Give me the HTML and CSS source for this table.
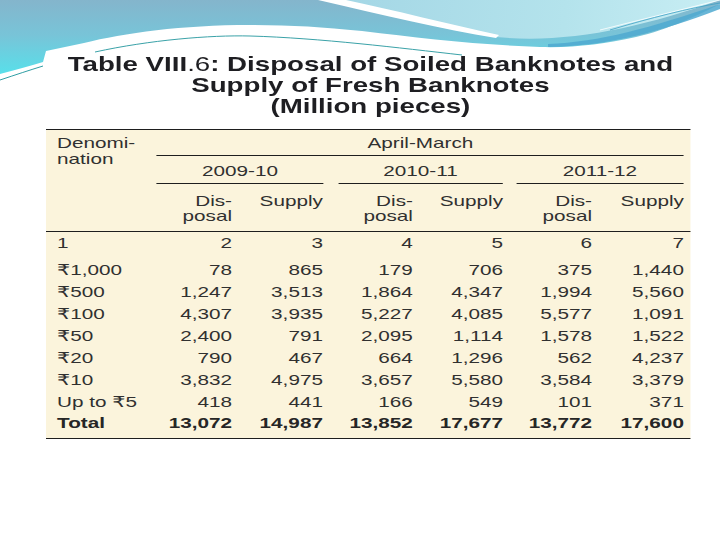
FILE: index.html
```html
<!DOCTYPE html>
<html>
<head>
<meta charset="utf-8">
<link rel="stylesheet" href="styles.css">
</head>
<body>
<div class="slide">
  <svg class="swoosh" width="720" height="90" viewBox="0 0 720 90">
    <defs>
      <linearGradient id="gBase" x1="0" y1="0" x2="0" y2="78" gradientUnits="userSpaceOnUse">
        <stop offset="0" stop-color="#84b5cc"/>
        <stop offset="0.45" stop-color="#78c4d8"/>
        <stop offset="1" stop-color="#55e2ec"/>
      </linearGradient>
      <linearGradient id="gLight" x1="330" y1="0" x2="720" y2="40" gradientUnits="userSpaceOnUse">
        <stop offset="0" stop-color="#a3d6e5"/>
        <stop offset="0.6" stop-color="#b4e3ec"/>
        <stop offset="1" stop-color="#c9eef4"/>
      </linearGradient>
    </defs>
    <path d="M0,0 H720 V4 C700,14 668,30 636,37 C604,44 574,48 540,47 C480,45 420,38 362,31 C322,27 290,25 250,25 C182,25 124,33 84,43 L46,51 L43,62 C30,66 15,70 0,74 Z" fill="url(#gBase)"/>
    <path d="M326,0 C388,14 446,28 496,37 C566,44 640,28 720,0 Z" fill="url(#gLight)"/>
    <path d="M318,0 C382,15 442,29 496,38 L499,35 C448,24 394,10 346,0 Z" fill="#ffffff"/>
    <path d="M548,44 C600,42 650,28 720,4 L720,9 C660,32 608,46 548,47 Z" fill="#4fa9d0" opacity="0.85"/>
    <path d="M0,80 C15,75 30,70 43,66" stroke="#2f9ea4" stroke-width="1" fill="none"/>
    <path d="M95,52 C150,40 210,35 250,36 C320,38 400,48 462,55" stroke="#3aa2a8" stroke-width="1" fill="none"/>
    <path d="M600,30 C640,20 680,10 720,0" stroke="#ffffff" stroke-width="1" fill="none" opacity="0.8"/>
    <path d="M610,30 C650,18 690,8 720,3" stroke="#3d9fc4" stroke-width="0.8" fill="none"/>
  </svg>
  <div class="sheet">
    <h1 class="title">Table VIII<span class="lt">.6</span>: Disposal of Soiled Banknotes and<br>Supply of Fresh Banknotes<br>(Million pieces)</h1>
    <div class="tbl">
      <div class="denom">Denomi-<br>nation</div>
      <div class="april">April-March</div>
      <div class="year">2009-10</div>
      <div class="year g2">2010-11</div>
      <div class="year g3">2011-12</div>
      <div class="sub first">Dis-<br>posal</div>
      <div class="sub">Supply</div>
      <div class="sub">Dis-<br>posal</div>
      <div class="sub">Supply</div>
      <div class="sub">Dis-<br>posal</div>
      <div class="sub">Supply</div>
      <div class="rule"></div>

      <div class="hd lab">1</div><div class="hd num">2</div><div class="hd num">3</div><div class="hd num">4</div><div class="hd num">5</div><div class="hd num">6</div><div class="hd num">7</div>

      <div class="cell lab">₹1,000</div><div class="cell num">78</div><div class="cell num">865</div><div class="cell num">179</div><div class="cell num">706</div><div class="cell num">375</div><div class="cell num">1,440</div>
      <div class="cell lab">₹500</div><div class="cell num">1,247</div><div class="cell num">3,513</div><div class="cell num">1,864</div><div class="cell num">4,347</div><div class="cell num">1,994</div><div class="cell num">5,560</div>
      <div class="cell lab">₹100</div><div class="cell num">4,307</div><div class="cell num">3,935</div><div class="cell num">5,227</div><div class="cell num">4,085</div><div class="cell num">5,577</div><div class="cell num">1,091</div>
      <div class="cell lab">₹50</div><div class="cell num">2,400</div><div class="cell num">791</div><div class="cell num">2,095</div><div class="cell num">1,114</div><div class="cell num">1,578</div><div class="cell num">1,522</div>
      <div class="cell lab">₹20</div><div class="cell num">790</div><div class="cell num">467</div><div class="cell num">664</div><div class="cell num">1,296</div><div class="cell num">562</div><div class="cell num">4,237</div>
      <div class="cell lab">₹10</div><div class="cell num">3,832</div><div class="cell num">4,975</div><div class="cell num">3,657</div><div class="cell num">5,580</div><div class="cell num">3,584</div><div class="cell num">3,379</div>
      <div class="cell lab">Up to ₹5</div><div class="cell num">418</div><div class="cell num">441</div><div class="cell num">166</div><div class="cell num">549</div><div class="cell num">101</div><div class="cell num">371</div>
      <div class="cell lab tot">Total</div><div class="cell num tot">13,072</div><div class="cell num tot">14,987</div><div class="cell num tot">13,852</div><div class="cell num tot">17,677</div><div class="cell num tot">13,772</div><div class="cell num tot">17,600</div>
    </div>
  </div>
</div>
</body>
</html>
```
FILE: styles.css
```css
html, body {
  margin: 0;
  padding: 0;
  background: #ffffff;
}

.slide {
  position: relative;
  width: 720px;
  height: 540px;
  overflow: hidden;
  background: #ffffff;
}

.swoosh {
  position: absolute;
  left: 0;
  top: 0;
  display: block;
}

.sheet {
  position: relative;
  width: 466.7px;
  margin-left: 46px;
  padding-top: 52.7px;
  transform: scaleX(1.38);
  transform-origin: 0 0;
  font-family: "Liberation Sans", "DejaVu Sans", Arial, sans-serif;
}

.title {
  margin: 0 0 12.5px 0;
  padding-left: 3.6px;
  font-size: 21px;
  line-height: 21.3px;
  font-weight: bold;
  text-align: center;
  color: #1e1e22;
  transform: scaleX(0.955);
  transform-origin: 50% 0;
}

.title .lt {
  font-weight: normal;
}

.tbl {
  display: grid;
  grid-template-columns: 80.4px 54.4px 65.9px 65.2px 65.3px 64.5px 66.6px 4.4px;
  background: #fbf4dc;
  border-top: 1px solid #1e1e1e;
  border-bottom: 1px solid #1e1e1e;
  padding-bottom: 3.5px;
  font-size: 15px;
  color: #303030;
}

.denom {
  grid-row: span 3;
  padding: 5px 0 0 8px;
  line-height: 16px;
}

.april {
  grid-column: 2 / span 6;
  padding: 5px 0 4px 0;
  line-height: 16px;
  text-align: center;
  border-bottom: 1px solid #1e1e1e;
}

.year {
  grid-column: span 2;
  padding: 7px 0 4px 0;
  line-height: 16px;
  text-align: center;
  border-bottom: 1px solid #1e1e1e;
}

.year.g2 {
  margin-left: 10.9px;
}

.year.g3 {
  margin-left: 9.4px;
}

.sub {
  padding: 9.3px 0 7.7px 0;
  line-height: 15px;
  text-align: right;
}

.sub.first {
  grid-column-start: 2;
}

.rule {
  grid-column: 1 / -1;
  height: 1px;
  background: #1e1e1e;
}

.hd {
  line-height: 22px;
  padding-bottom: 5px;
}

.cell {
  line-height: 21.9px;
}

.lab {
  grid-column-start: 1;
  padding-left: 8px;
  white-space: nowrap;
}

.num {
  text-align: right;
}

.tot {
  font-weight: bold;
  color: #262626;
}
```
